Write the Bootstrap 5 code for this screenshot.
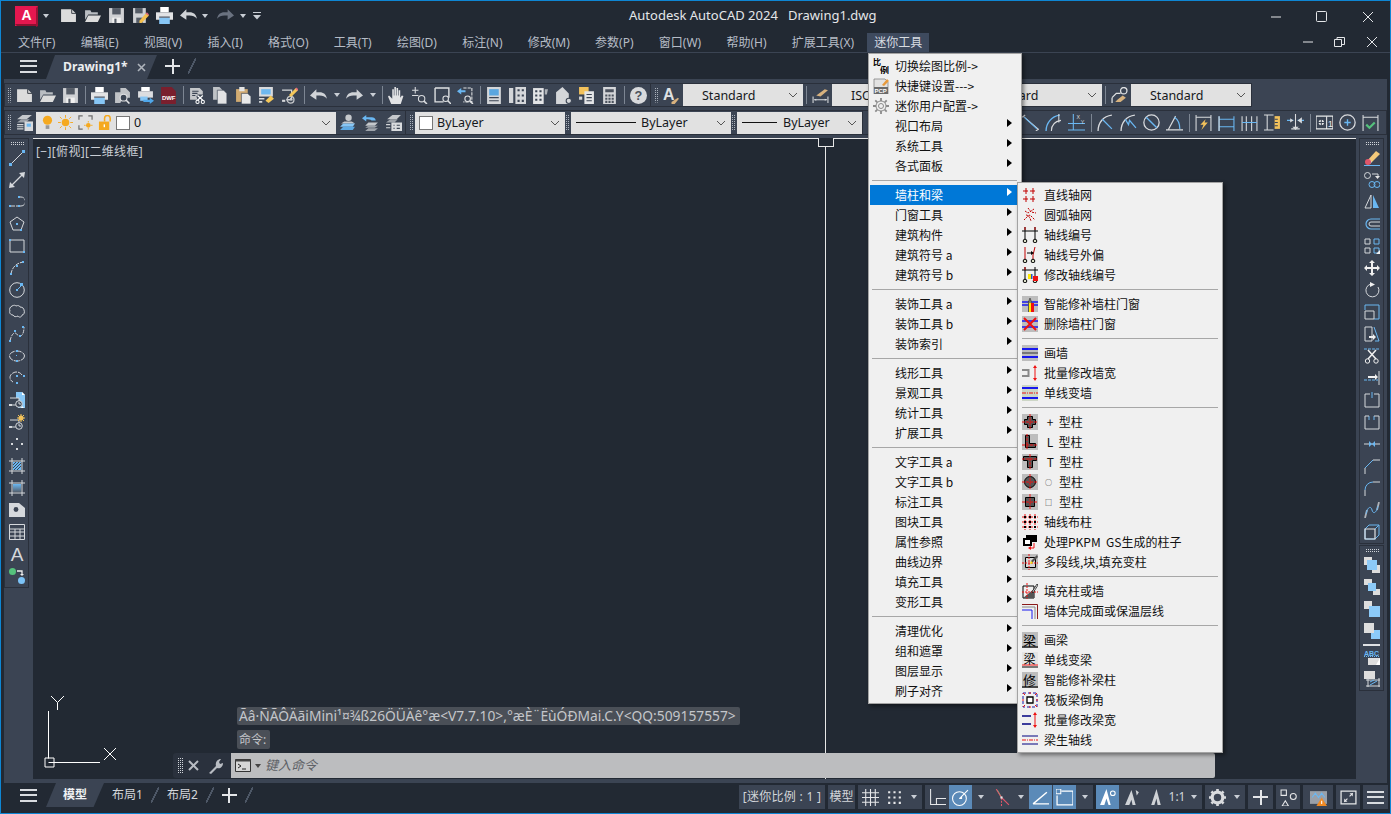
<!DOCTYPE html>
<html lang="zh-CN">
<head>
<meta charset="UTF-8" />
<title>Autodesk AutoCAD 2024 - Drawing1.dwg</title>
<link rel="stylesheet" href="https://cdn.jsdelivr.net/npm/bootstrap@5.3.3/dist/css/bootstrap.min.css" />
<script src="https://cdn.jsdelivr.net/npm/bootstrap@5.3.3/dist/js/bootstrap.bundle.min.js"></script>
<style>
  html, body { height: 100%; overflow: hidden; background: #222933; }
  body { font: 12px/1.2 "Noto Sans", "Noto Sans CJK SC", sans-serif; color: #c9ced5; }
  .app-win { position: relative; width: 1391px; height: 814px; border: 1px solid #0e86d4; background: #222933; overflow: hidden; }
  svg { display: block; flex: none; }

  /* title bar */
  .title-bar { height: 32px; padding: 0 0 3px 14px; }
  .title-bar .qic { width: 17px; height: 17px; margin-right: 7px; }
  .logo-a { margin-right: 3px; }
  .qcaret { width: 0; height: 0; border: 3.5px solid transparent; border-top: 4px solid #c9ced5; border-bottom: 0; flex: none; }
  .car-logo { margin-right: 11px; }
  .car-undo { margin-left: -2px; margin-right: 9px; }
  .car-redo { margin-left: -1px; margin-right: 6px; }
  .win-title { position: absolute; left: 628px; top: 7px; font-size: 13px; color: #e4e6e9; white-space: pre; }
  .win-ctl { position: absolute; display: flex; }
  .win-ctl svg { width: 12px; height: 12px; }
  .ctl-top { left: 1269px; top: 10px; gap: 34px; }
  .ctl-doc { left: 1301px; top: 35px; gap: 20px; }

  /* menu bar */
  .menu-bar { height: 20px; padding-left: 17px; gap: 25.25px; border-bottom: 1px solid #3b4453; color: #b6bcc6; line-height: 19px; }
  .menu-on { background: #3e4a5e; color: #d8dce2; margin: 0 0 0 -12px; padding: 0 6px; height: 19px; width: 62px; text-align: center; }

  /* document tabs */
  .doc-tabs { height: 26px; padding-left: 19px; }
  .burger { width: 17px; height: 13px; border-top: 2px solid #d9dce0; border-bottom: 2px solid #d9dce0; position: relative; flex: none; }
  .burger::after { content: ""; position: absolute; left: 0; right: 0; top: 3.5px; height: 2px; background: #d9dce0; }
  .doc-tab { height: 24px; width: 111px; margin-left: 9px; margin-top: 2px; background: #3b4453; clip-path: polygon(9px 0, 100% 0, 91% 100%, 0 100%); color: #eceef0; font-weight: 700; font-size: 12.2px; padding-left: 17px; gap: 9px; }
  .slash { width: 8px; height: 16px; background: linear-gradient(to bottom right, transparent 44%, #4d5766 44% 56%, transparent 56%); flex: none; }
  .plus-ic { width: 15px; height: 15px; flex: none; background: linear-gradient(#e4e6e9, #e4e6e9) center/100% 2px no-repeat, linear-gradient(#e4e6e9, #e4e6e9) center/2px 100% no-repeat; }

  /* toolbars */
  .tool-band { height: 59px; margin: 0 3px; background: #3b4453; padding-top: 4px; }
  .tool-row { height: 24px; margin-bottom: 3px; }
  .tool-row2 { height: 25px; }
  .tbar { height: 100%; border: 1px solid #2a303b; display: flex; align-items: center; }
  .tool-row > .tbar + .tbar, .tool-row2 > .tbar + .tbar { border-left: 0; padding-left: 1px; }
  .grip { width: 8px; flex: none; height: 15px; background: conic-gradient(#aab1bb 25%, transparent 0) 2px 0/2px 2px; background-repeat: repeat; clip-path: inset(0 2px 0 2px); }
  .grip-s { width: 6px; clip-path: inset(0 1px 0 1px); }
  .tic { width: 17px; height: 17px; margin: 0 3px; }
  .tsep { width: 6px; height: 18px; flex: none; background: linear-gradient(#7d8693, #7d8693) center/1px 100% no-repeat; }
  .tcar { width: 13px; display: flex; justify-content: center; flex: none; }
  .cbo { height: 22px; background: #e1e1e1; color: #16181c; display: flex; align-items: center; flex: none; position: relative; font-size: 12.5px; white-space: nowrap; }
  .cbo-arrow { position: absolute; right: 5px; top: 8px; width: 10px; height: 6px; }
  .w-120 { width: 120px; padding-left: 19px; }
  .w-106 { width: 106px; padding-left: 19px; }
  .w-135 { width: 135px; padding-left: 18px; }
  .w-300 { width: 300px; padding-left: 6px; }
  .w-150 { width: 150px; padding-left: 4px; }
  .w-160 { width: 160px; padding-left: 5px; }
  .w-125 { width: 125px; padding-left: 5px; }
  .swatch { width: 14px; height: 14px; background: #fff; border: 1px solid #777; flex: none; }
  .line-sample { height: 1px; background: #111; flex: none; }
  .ls-60 { width: 60px; margin-right: 5px; }
  .ls-35 { width: 35px; margin-right: 6px; }
  .lay-ic { width: 15px; height: 15px; margin-right: 5px; }
  .lay-bulb { width: 11px; }
  .lay-lock { margin-right: 3px; }

  /* work area */
  .work { height: 641px; margin: 0 3px; }
  .side-band { background: #3b4453; flex: none; }
  .side-left { width: 29px; }
  .side-right { width: 31px; padding-left: 3px; }
  .vbar { width: 25px; border: 1px solid #2a303b; display: flex; flex-direction: column; align-items: center; }
  .vbar + .vbar { margin-top: 1px; }
  .vbar svg { width: 16px; height: 16px; margin: 3px 0; }
  .vgrip { width: 14px; height: 3px; margin: 3px 0 2px; background: conic-gradient(#cfd3d8 25%, transparent 0) 0 0/2px 2px; flex: none; }
  .vline { width: 17px; height: 2px; background: #dfe1e4; margin: 2px 0 0; flex: none; }
  .canvas { position: relative; background: #222933; flex-grow: 1; border-top: 1px solid #e6e6e6; }
  .cross-v { position: absolute; left: 792px; top: 0; bottom: 0; width: 1px; background: #e6e6e6; }
  .pick-box { position: absolute; left: 785px; top: -1px; width: 16px; height: 9px; border: 1px solid #e6e6e6; border-top: 0; background: #222933; }
  .view-label { position: absolute; left: 3px; top: 6px; color: #c9ced5; white-space: nowrap; letter-spacing: .35px; }
  .ucs-ic { position: absolute; left: 9px; top: 552px; width: 80px; height: 80px; }
  .cmd-hist { position: absolute; left: 204px; background: #4a4f57; color: #c4c6ca; border-radius: 2px; padding: 0 2px; white-space: nowrap; font-size: 13.8px; }
  .cmd-hist1 { top: 568px; height: 18px; line-height: 18px; width: 503px; }
  .cmd-hist2 { top: 591px; height: 19px; line-height: 19px; width: 33px; font-size: 12px; }
  .cmd-bar { position: absolute; left: 140px; top: 614px; width: 1042px; height: 25px; }
  .cmd-handle { width: 58px; background: #2a313d; flex: none; padding-left: 4px; gap: 5px; border-radius: 3px 0 0 3px; }
  .cmd-grip { width: 6px; height: 16px; background: conic-gradient(#cfd3d8 25%, transparent 0) 0 0/2px 2px; flex: none; }
  .cmd-input { background: #bcbdbf; flex-grow: 1; padding-left: 4px; color: #5e6166; font-style: italic; font-size: 13px; border-radius: 0 2px 2px 0; }
  .cmd-caret { border-top-color: #444; }

  /* bottom tabs and status */
  .bottom-gap { height: 4px; margin: 0 3px; background: #3b4453; }
  .bottom-bar { height: 30px; padding: 0 0 6px 19px; }
  .lay-tab { height: 24px; width: 58px; margin-left: 9px; background: #3b4453; clip-path: polygon(10px 0, 100% 0, 82% 100%, 0 100%); color: #eef0f2; font-weight: 700; font-size: 12px; padding-left: 17px; line-height: 24px; }
  .lay-other { color: #d4d7db; font-size: 12px; }
  .status { height: 24px; margin-right: 2px; margin-top: 4px; gap: 3px; }
  .sgrp { height: 24px; background: #3b4453; display: flex; align-items: center; flex: none; color: #d3d6da; }
  .sslot { width: 24px; height: 24px; display: flex; align-items: center; justify-content: center; flex: none; }
  .sslot svg { width: 17px; height: 17px; }
  .sslot-on { background: #5b8ab8; width: 23px; margin-right: 1px; }
  .sslot-25 { width: 25px; }
  .sslot-30 { width: 30px; }
  .sarr { width: 16px; display: flex; justify-content: center; flex: none; }
  .stext-1 { width: 86px; justify-content: center; letter-spacing: .3px; }
  .stext-2 { width: 27px; justify-content: center; font-size: 12px; }
  .stext-3 { width: 18px; justify-content: center; }

  /* cascading menus */
  .pop-menu { position: absolute; background: #f0f0f0; border: 1px solid #a3a3a3; padding: 2px; color: #111; font-family: "Noto Sans CJK SC", "Noto Sans", sans-serif; box-shadow: 2px 2px 4px rgba(0, 0, 0, .45); z-index: 5; }
  .pop-main { left: 867px; top: 52px; width: 154px; height: 651px; padding-left: 1px; }
  .pop-sub { left: 1016px; top: 181px; width: 206px; height: 571px; z-index: 6; }
  .pitem { height: 20px; display: flex; align-items: center; position: relative; white-space: pre; line-height: 20px; }
  .pop-sub .pitem { padding-left: 24px; }
  .pitem > svg { position: absolute; left: 2px; top: 2px; width: 16px; height: 16px; }
  .pop-main .pitem { padding-left: 25px; }
  .pop-main .pitem > svg { left: 3px; }
  .pitem-on { background: #0078d7; color: #fff; }
  .psub::after { content: ""; position: absolute; right: 7px; top: 3px; border: 4px solid transparent; border-left: 5px solid #000; border-right: 0; }
  .pitem-on.psub::after { border-left-color: #fff; }
  .psep { height: 9px; display: flex; align-items: center; padding: 0 2px; }
  .psep::before { content: ""; flex: 1; height: 1px; background: #a7a7a7; }
  .mini-glyph { font-size: 7px; width: 15px; padding-left: 1px; }
</style>
</head>
<body>
<svg width="0" height="0" class="position-absolute">
  <defs>
    <!-- quick access / standard toolbar -->
    <symbol id="i-new" viewBox="0 0 16 16"><path d="M1 2h10l4 4v8H1z" fill="#dcdcdc"/><path d="M11 2v4h4" fill="none" stroke="#222933" stroke-width=".8"/></symbol>
    <symbol id="i-open" viewBox="0 0 16 16"><path d="M1 3h5l1 2h6v2H4L1 12z" fill="#b9bdc2"/><path d="M4 8h12l-3 6H1z" fill="#dcdcdc"/></symbol>
    <symbol id="i-save" viewBox="0 0 16 16"><path d="M1 1h14v14H1z" fill="#cfd1d4"/><path d="M4 1h8v6H4z" fill="#545b66"/><path d="M4 10h8v5H4z" fill="#f0f0f0"/><path d="M6 11h2v4H6z" fill="#545b66"/></symbol>
    <symbol id="i-saveas" viewBox="0 0 16 16"><path d="M1 1h12v14H1z" fill="#cfd1d4"/><path d="M3 1h7v5H3z" fill="#545b66"/><path d="M4 10h6v5H4z" fill="#545b66"/><path d="M7 13l6-7 3 2-7 7H7z" fill="#f5c04e"/><path d="M13 6l1-1 2 2-1 1z" fill="#e56b7b"/></symbol>
    <symbol id="i-print" viewBox="0 0 16 16"><path d="M4 0h8v5H4z" fill="#fff"/><path d="M0 5h16v7H0z" fill="#e2e3e5"/><path d="M3 10h10v6H3z" fill="#87c6f5"/><path d="M3 9h10v1H3z" fill="#3b4453"/></symbol>
    <symbol id="i-preview" viewBox="0 0 16 16"><path d="M1 5h5V1h5l4 4v5H8l-2 5H1z" fill="#bfc2c6"/><circle cx="9" cy="10" r="3.2" fill="#3b4453" stroke="#e3e4e6"/><path d="M11.500 12.500l3 3" stroke="#e3e4e6" stroke-width="1.500"/></symbol>
    <symbol id="i-plotbatch" viewBox="0 0 16 16"><path d="M4 0h8v4H4z" fill="#fff"/><path d="M1 4h14v6H1z" fill="#dcdde0"/><path d="M3 9h7v4H3z" fill="#87c6f5"/><path d="M6 12h6v-2l4 3-4 3v-2H6z" fill="#4fa7ea"/></symbol>
    <symbol id="i-dwf" viewBox="0 0 16 16"><path d="M1 0h10l4 4v12H1z" fill="#7a1f2d"/><text x="1.800" y="12.500" font-size="5.600" font-weight="700" fill="#fff" font-family="Liberation Sans">DWF</text></symbol>
    <symbol id="i-cut" viewBox="0 0 16 16"><path d="M1 1h9l3 3v3H8l-1 2 1 3H1z" fill="#c5c7ca"/><path d="M3 4h6M3 6h5M3 8h3" stroke="#3b4453"/><circle cx="8" cy="14" r="1.500" fill="none" stroke="#fff"/><circle cx="13" cy="14" r="1.500" fill="none" stroke="#fff"/><path d="M8 12.500L13 8M13 12.500L8 8" stroke="#fff" stroke-width="1.200"/></symbol>
    <symbol id="i-copy" viewBox="0 0 16 16"><path d="M1 0h6l3 3v9H1z" fill="#bfc2c6"/><path d="M5 3h6l3 3v10H5z" fill="#e1e2e4" stroke="#3b4453" stroke-width=".6"/></symbol>
    <symbol id="i-paste" viewBox="0 0 16 16"><path d="M1 2h11v12H1z" fill="#d2ab72"/><path d="M4 0h5v4H4z" fill="#e4e4e4"/><path d="M6 6h6l3 3v7H6z" fill="#e8e8e8" stroke="#3b4453" stroke-width=".6"/></symbol>
    <symbol id="i-match" viewBox="0 0 16 16"><path d="M1 0h13v9H1z" fill="#d9dadc"/><path d="M3 2h9v5H3z" fill="#6fb8ef"/><path d="M1 11h5M1 14h3" stroke="#d9dadc" stroke-width="1.500"/><path d="M7 13l5-5 3 3-5 4z" fill="#f4c75a"/></symbol>
    <symbol id="i-publish" viewBox="0 0 16 16"><path d="M1 3h9v9H5" fill="none" stroke="#d4d6d9" stroke-width="1.200"/><circle cx="9" cy="12" r="3.200" fill="none" stroke="#c7c9cc" stroke-width="1.200"/><path d="M9 10v2h2" stroke="#c7c9cc" fill="none"/><path d="M8 7l6-6 2 2-6 6H8z" fill="#f4c75a"/><path d="M14 1l2 2" stroke="#e56b7b" stroke-width="1.500"/><path d="M1 12h3v2H1z" fill="#d4d6d9"/></symbol>
    <symbol id="i-undo" viewBox="0 0 16 16"><path d="M0 8l6-6v3h3c4 0 6 2 7 6-2-2-4-3-7-3H6v4z" fill="#d0d3d7"/></symbol>
    <symbol id="i-redo" viewBox="0 0 16 16"><path d="M16 8l-6-6v3H7c-4 0-6 2-7 6 2-2 4-3 7-3h3v4z" fill="#d0d3d7"/></symbol>
    <symbol id="i-redo-off" viewBox="0 0 16 16"><path d="M16 8l-6-6v3H7c-4 0-6 2-7 6 2-2 4-3 7-3h3v4z" fill="#6a7280"/></symbol>
    <symbol id="i-hand" viewBox="0 0 16 16"><path d="M3 16L0 9l1-1 3 3V2h1.500v6H6V0h1.500v8H8V1h1.500v7h.5V3h1.500v7l1.500-2 1.500.5L12 16z" fill="#e2e3e5"/></symbol>
    <symbol id="i-zrt" viewBox="0 0 16 16"><path d="M4 0v6M1 3h6M1 8h6" stroke="#d9dbde" fill="none"/><circle cx="10" cy="11" r="3" fill="none" stroke="#d9dbde"/><path d="M12 13l3 3" stroke="#d9dbde" stroke-width="1.500"/></symbol>
    <symbol id="i-zwin" viewBox="0 0 16 16"><path d="M1 1h13v9M9 14H1V1" fill="none" stroke="#dfe1e3" stroke-width="1.300"/><circle cx="11" cy="11" r="2.600" fill="none" stroke="#dfe1e3"/><path d="M13 13l3 3" stroke="#dfe1e3" stroke-width="1.400"/></symbol>
    <symbol id="i-zprev" viewBox="0 0 16 16"><path d="M6 1h8v13H6" fill="none" stroke="#dfe1e3" stroke-dasharray="3 1"/><path d="M0 4l4-3v2h4v2H4v2z" fill="#6ab7f2"/><circle cx="10" cy="11" r="2.600" fill="none" stroke="#dfe1e3"/><path d="M12 13l3 3" stroke="#dfe1e3" stroke-width="1.400"/></symbol>
    <symbol id="i-props" viewBox="0 0 16 16"><path d="M1 0h13v16H1z" fill="#d4d6d9"/><path d="M3 2h9v6H3z" fill="#5aa6df"/><path d="M3 10h9M3 13h9" stroke="#3b4453"/></symbol>
    <symbol id="i-dc" viewBox="0 0 16 16"><path d="M0 1h4v14H0zM6 0h10v16H6z" fill="#d4d6d9"/><path d="M8 2h2v2H8zM12 2h2v2h-2zM8 7h2v2H8zM12 7h2v2h-2zM8 12h2v2H8zM12 12h2v2h-2z" fill="#3b4453"/></symbol>
    <symbol id="i-tp" viewBox="0 0 16 16"><path d="M1 1h10v15H1z" fill="#e3e4e6"/><path d="M3 3h2v2H3zM7 3h2v2H7zM3 7h2v2H3zM7 7h2v2H7zM3 11h2v2H3zM7 11h2v2H7z" fill="#3b4453"/><path d="M12 2h3l-1 5h-2z" fill="#aeb2b8"/></symbol>
    <symbol id="i-ssm" viewBox="0 0 16 16"><path d="M1 5l6-5 6 6v10H1z" fill="#d4d6d9"/><circle cx="13" cy="13" r="2.500" fill="#d4d6d9" stroke="#3b4453"/></symbol>
    <symbol id="i-mkup" viewBox="0 0 16 16"><path d="M1 0h9v7H1z" fill="#f3c25b"/><path d="M6 4h9v12H6z" fill="#e4e5e7"/><path d="M8 7h5M8 10h5M8 13h5" stroke="#3b4453"/><path d="M1 9h3v3H1z" fill="#d4d6d9"/></symbol>
    <symbol id="i-calc" viewBox="0 0 16 16"><path d="M2 0h12v16H2z" fill="#d4d6d9"/><path d="M4 2h8v3H4zM4 7h2v2H4zM7 7h2v2H7zM10 7h2v2h-2zM4 10h2v2H4zM7 10h2v2H7zM10 10h2v2h-2zM4 13h2v2H4zM7 13h2v2H7zM10 13h2v2h-2z" fill="#4b525d"/></symbol>
    <symbol id="i-help" viewBox="0 0 16 16"><circle cx="8" cy="8" r="8" fill="#d8dadd"/><text x="8" y="12.500" text-anchor="middle" font-size="12" font-weight="700" fill="#4a515c" font-family="Liberation Sans">?</text></symbol>
    <symbol id="i-tstyle" viewBox="0 0 16 16"><text x="0" y="12" font-size="15" font-weight="700" fill="#dfe1e3" font-family="Liberation Sans">A</text><path d="M8 14l6-4 1 1-4 5H8z" fill="#d8b27e"/></symbol>
    <symbol id="i-dstyle" viewBox="0 0 16 16"><path d="M1 9v6M15 9v6M2 12h12" stroke="#d9dbde" fill="none"/><path d="M2 12l2-1v2zM14 12l-2-1v2z" fill="#d9dbde"/><path d="M4 8l8-6 3 1-7 6z" fill="#d8b27e"/></symbol>
    <symbol id="i-mstyle" viewBox="0 0 16 16"><circle cx="12" cy="3.500" r="3" fill="none" stroke="#dfe1e3" stroke-width="1.200"/><path d="M1 10l4-4 4 0" fill="none" stroke="#dfe1e3" stroke-width="1.200"/><path d="M1 15v-5" stroke="#dfe1e3" stroke-width="1.200"/><path d="M6 12l5-4 3 2-5 4H4z" fill="#d8b27e"/></symbol>
    <!-- layer toolbar -->
    <symbol id="i-lprops" viewBox="0 0 16 16"><path d="M6 1h9l-5 4H1z" fill="#c5c8cc"/><path d="M5 5h8l-4 3H1z" fill="#9ea3aa"/><path d="M8 7h8v9H8z" fill="#d9dbde"/><path d="M10 9h4v3h-4z" fill="#6fb8ef"/><path d="M1 10h6M1 12h6M1 14h6" stroke="#d4d6d9"/></symbol>
    <symbol id="i-bulb" viewBox="0 0 12 16"><circle cx="6" cy="5.500" r="5" fill="#f5a91f"/><path d="M4 11h4v4H4z" fill="#979797"/></symbol>
    <symbol id="i-sun" viewBox="0 0 16 16"><circle cx="8" cy="8" r="4" fill="#f5a91f"/><path d="M8 0v3M8 13v3M0 8h3M13 8h3M2 2l2 2M12 12l2 2M14 2l-2 2M4 12l-2 2" stroke="#f5a91f" fill="none"/></symbol>
    <symbol id="i-vpfrz" viewBox="0 0 16 16"><path d="M5 1H1v4M11 1h4v4M1 11v4h4" fill="none" stroke="#6d6d6d" stroke-width="1.300"/><circle cx="11" cy="11" r="2.500" fill="#f5a91f"/><path d="M11 6.500v1.500M11 14v1.500M6.500 11H8M14 11h1.500" stroke="#f5a91f"/></symbol>
    <symbol id="i-lock" viewBox="0 0 14 16"><path d="M6 7V3.500a3 3 0 0 1 6 0V7" fill="none" stroke="#f5a91f" stroke-width="1.600"/><path d="M0 7h11v9H0z" fill="#f5a91f"/><path d="M5 10h1.500v3H5z" fill="#fff"/></symbol>
    <symbol id="i-lmatch" viewBox="0 0 16 16"><circle cx="9" cy="3.500" r="3" fill="#c5c8cc"/><path d="M5 7h7l3 2H2z" fill="#c5c8cc"/><path d="M4 9h11l-2 3H1z" fill="#87c6f5"/><path d="M4 12h11l-2 3H1z" fill="#5ea9e3"/></symbol>
    <symbol id="i-lprev" viewBox="0 0 16 16"><path d="M0 4l4-3v2h5a4 4 0 0 1 4 3H9c-1-1-3-1-5-1v2z" fill="#6ab7f2"/><path d="M6 8h9l-3 3H3z" fill="#c5c8cc"/><path d="M6 11h9l-3 2H3zM6 13.500h9L12 16H3z" fill="#9ea3aa"/></symbol>
    <symbol id="i-lstate" viewBox="0 0 16 16"><path d="M7 1h8l-4 4H2z" fill="#c5c8cc"/><path d="M5 5h7L9 8H1z" fill="#9ea3aa"/><path d="M6 8h10v8H6z" fill="#d9dbde"/><path d="M8 10h1v1H8zM11 10h3v1h-3zM8 13h1v1H8zM11 13h3v1h-3z" fill="#3b4453"/><path d="M1 10h4M1 13h4" stroke="#d4d6d9"/></symbol>
    <!-- dimension toolbar -->
    <symbol id="i-dlinear" viewBox="0 0 16 16"><path d="M0 3l3-2M13 16l3-2M1 2l14 12" stroke="#d9dbde" fill="none"/><path d="M2 3l12 11" stroke="#6ab7f2"/></symbol>
    <symbol id="i-darc" viewBox="0 0 16 16"><path d="M1 16C1 9 6 2 14 1" fill="none" stroke="#6ab7f2" stroke-width="1.300"/><path d="M6 16c0-5 3-9 9-10" fill="none" stroke="#d9dbde"/><path d="M13 0v8" stroke="#d9dbde"/></symbol>
    <symbol id="i-dord" viewBox="0 0 16 16"><path d="M5 0v15M0 9h16M0 15h16" stroke="#6ab7f2" fill="none"/><text x="8" y="4.500" font-size="5" fill="#d9dbde" font-family="Liberation Sans">X</text><text x="12" y="9" font-size="5" fill="#d9dbde" font-family="Liberation Sans">Y</text></symbol>
    <symbol id="i-drad" viewBox="0 0 16 16"><path d="M1 16C1 8 6 2 14 1" fill="none" stroke="#d9dbde" stroke-width="1.200"/><path d="M5 5l9 9" stroke="#6ab7f2" stroke-width="1.200"/></symbol>
    <symbol id="i-djog" viewBox="0 0 16 16"><path d="M1 16C1 8 6 2 14 1" fill="none" stroke="#d9dbde" stroke-width="1.200"/><path d="M5 5l3 5 1-4 6 7" fill="none" stroke="#6ab7f2" stroke-width="1.200"/></symbol>
    <symbol id="i-ddia" viewBox="0 0 16 16"><circle cx="8" cy="8" r="7.200" fill="none" stroke="#d9dbde" stroke-width="1.200"/><path d="M3 3l10 10" stroke="#6ab7f2" stroke-width="1.300"/></symbol>
    <symbol id="i-dang" viewBox="0 0 16 16"><path d="M0 15h16M2 15L9 2" stroke="#d9dbde" fill="none" stroke-width="1.100"/><path d="M8 3c3 2 5 6 5 11" stroke="#6ab7f2" fill="none" stroke-width="1.100"/></symbol>
    <symbol id="i-dquick" viewBox="0 0 16 16"><path d="M1 1v15M15 1v15M1 3h14" stroke="#d9dbde" fill="none"/><path d="M10 5L5 10h3l-2 5 6-7H9z" fill="#f3c25b"/></symbol>
    <symbol id="i-dcont" viewBox="0 0 16 16"><path d="M1 2v14M15 2v14M1 5h14M1 12h14" stroke="#6ab7f2" fill="none"/><path d="M1 2v14" stroke="#d9dbde"/></symbol>
    <symbol id="i-dbase" viewBox="0 0 16 16"><path d="M1 2v14M15 2v14M5 2v14M10 2v14" stroke="#d9dbde" fill="none"/><path d="M1 8h14" stroke="#6ab7f2"/></symbol>
    <symbol id="i-dspace" viewBox="0 0 16 16"><path d="M0 1h9M0 15h9" stroke="#d9dbde"/><path d="M3 1v14" stroke="#d9dbde"/><path d="M10 2h5v12h-5z" fill="#f3c25b"/><path d="M10 5h3M10 8h3M10 11h3" stroke="#3b4453"/></symbol>
    <symbol id="i-dbreak" viewBox="0 0 16 16"><path d="M0 6h6M10 6h6" stroke="#6ab7f2"/><path d="M8 0v13M4 14h8" stroke="#d9dbde" fill="none"/><path d="M10 6l4-3v6zM6 6L3 4v4z" fill="#d9dbde"/><path d="M5 12h6l-3 3z" fill="#d9dbde"/></symbol>
    <symbol id="i-dtol" viewBox="0 0 16 16"><path d="M0 2h16v12H0z" fill="none" stroke="#e8e9ea" stroke-width="1.200"/><path d="M10 2v12" stroke="#e8e9ea"/><circle cx="5" cy="8" r="2.500" fill="#e8e9ea"/><path d="M1 8h8M5 4v8" stroke="#3b4453"/><text x="11" y="12.500" font-size="9" fill="#e8e9ea" font-family="Liberation Sans">1</text></symbol>
    <symbol id="i-dcen" viewBox="0 0 16 16"><circle cx="8" cy="8" r="7.200" fill="none" stroke="#d9dbde" stroke-width="1.200"/><path d="M8 5v6M5 8h6" stroke="#6ab7f2" stroke-width="1.300"/></symbol>
    <symbol id="i-dins" viewBox="0 0 16 16"><path d="M1 1v15M15 1v15M1 3h14" stroke="#d9dbde" fill="none"/><path d="M4 10l3 3 5-5" fill="none" stroke="#55c17c" stroke-width="2"/></symbol>
    <!-- draw toolbar -->
    <symbol id="d-line" viewBox="0 0 16 16"><path d="M2 14L14 2" stroke="#d5d8dc"/><path d="M0 13h3v3H0zM13 0h3v3h-3z" fill="#6ab7f2"/></symbol>
    <symbol id="d-ray" viewBox="0 0 16 16"><path d="M2 14L14 2" stroke="#d5d8dc" stroke-width="1.300"/><path d="M0 16l1-6 5 5zM16 0l-1 6-5-5z" fill="#d5d8dc"/></symbol>
    <symbol id="d-pline" viewBox="0 0 16 16"><path d="M1 12h9M10 3h2a4.500 4.500 0 0 1 0 9h-1" fill="none" stroke="#d5d8dc" stroke-dasharray="5 1"/><path d="M0 11h2v2H0zM9 11h2v2H9zM9 2h2v2H9z" fill="#6ab7f2"/></symbol>
    <symbol id="d-poly" viewBox="0 0 16 16"><path d="M8 1l7 5-3 8H4L1 6z" fill="none" stroke="#d5d8dc"/><path d="M7 7h2v2H7zM11 13h2v2h-2z" fill="#6ab7f2"/></symbol>
    <symbol id="d-rect" viewBox="0 0 16 16"><path d="M1 2h14v12H1z" fill="none" stroke="#d5d8dc"/><path d="M0 1h2v2H0zM14 13h2v2h-2z" fill="#6ab7f2"/></symbol>
    <symbol id="d-arc" viewBox="0 0 16 16"><path d="M2 14C3 7 8 3 14 2" fill="none" stroke="#d5d8dc" stroke-dasharray="4 1"/><path d="M1 13h2v2H1zM7 5h2v2H7zM13 1h2v2h-2z" fill="#6ab7f2"/></symbol>
    <symbol id="d-circle" viewBox="0 0 16 16"><circle cx="8" cy="8" r="7.300" fill="none" stroke="#d5d8dc"/><path d="M8 8l5-5" stroke="#6ab7f2"/><path d="M7 7h2v2H7zM11 1h3v3h-3z" fill="#6ab7f2"/></symbol>
    <symbol id="d-cloud" viewBox="0 0 16 16"><path d="M3 2c2-1 3-1 4 0 2-1 4 0 4 1 3 0 4 2 4 3 1 2 0 5-2 5 0 2-3 3-4 1-2 1-4 1-5-1-3 0-4-3-3-4C0 5 1 3 3 2z" fill="none" stroke="#d5d8dc"/></symbol>
    <symbol id="d-spline" viewBox="0 0 16 16"><path d="M1 15c1-5 3-8 5-8 2 0 2 3 5 3 3 0 4-5 4-9" fill="none" stroke="#d5d8dc" stroke-dasharray="4 1"/><path d="M0 14h2v2H0zM5 4h2v2H5zM10 9h2v2h-2zM13 0h2v2h-2z" fill="#6ab7f2"/></symbol>
    <symbol id="d-ell" viewBox="0 0 16 16"><ellipse cx="8" cy="8" rx="7.500" ry="5" fill="none" stroke="#d5d8dc" stroke-dasharray="6 1"/><path d="M7 2h2v2H7zM7 12h2v2H7zM7 7h1v1H7z" fill="#6ab7f2"/></symbol>
    <symbol id="d-ellarc" viewBox="0 0 16 16"><path d="M13 5C11 2 7 1 4 3 0 5 0 10 4 12" fill="none" stroke="#d5d8dc" stroke-dasharray="5 1"/><path d="M7 5h2v2H7zM14 5h2v2h-2zM7 12h2v2H7z" fill="#6ab7f2"/></symbol>
    <symbol id="d-ins" viewBox="0 0 16 16"><path d="M7 0h6l3 3v13H9V6H7z" fill="#87c6f5"/><path d="M13 0l3 3h-3z" fill="#fff"/><path d="M13 14l2 2h-3z" fill="#fff"/><path d="M1 6h9v7H1" fill="#3b4453" stroke="#d5d8dc"/><circle cx="10" cy="12" r="3.300" fill="#3b4453" stroke="#d5d8dc"/><path d="M10 10v2h2" stroke="#d5d8dc" fill="none"/><path d="M0 12h3v2H0z" fill="#d5d8dc"/></symbol>
    <symbol id="d-blk" viewBox="0 0 16 16"><path d="M1 6h9v7H1" fill="none" stroke="#d5d8dc"/><circle cx="10" cy="12" r="3.300" fill="#3b4453" stroke="#d5d8dc"/><path d="M10 10v2h2" stroke="#d5d8dc" fill="none"/><path d="M0 12h3v2H0z" fill="#d5d8dc"/><circle cx="12" cy="4" r="2.500" fill="#f3c25b"/><path d="M12 0v8M8 4h8M9 1l6 6M15 1L9 7" stroke="#f3c25b"/></symbol>
    <symbol id="d-pt" viewBox="0 0 16 16"><path d="M7 2h2v2H7zM2 7h2v2H2zM12 7h2v2h-2zM7 12h2v2H7z" fill="#d5d8dc"/></symbol>
    <symbol id="d-hatch" viewBox="0 0 16 16"><path d="M0 3h16M0 13h16M3 0v16M13 0v16" stroke="#d5d8dc" fill="none"/><path d="M4 4h8v8H4z" fill="#6ab7f2"/><path d="M4 7l3-3M4 10l6-6M5 12l7-7M8 12l4-4" stroke="#3b4453"/></symbol>
    <symbol id="d-grad" viewBox="0 0 16 16"><defs><linearGradient id="gr1" x1="0" y1="0" x2="0" y2="1"><stop offset="0" stop-color="#6ab7f2"/><stop offset="1" stop-color="#55606e"/></linearGradient></defs><path d="M0 3h16M0 13h16M3 0v16M13 0v16" stroke="#d5d8dc" fill="none"/><path d="M4 4h8v8H4z" fill="url(#gr1)"/></symbol>
    <symbol id="d-region" viewBox="0 0 16 16"><path d="M0 1h10l6 5v9H0z" fill="#d5d8dc"/><circle cx="7" cy="7.500" r="2.400" fill="#3b4453"/></symbol>
    <symbol id="d-table" viewBox="0 0 16 16"><path d="M.5.500h15v15H.5zM.5 5h15M.5 8h15M.5 12h15M6 5v10.500M11 5v10.500" fill="none" stroke="#d5d8dc"/></symbol>
    <symbol id="d-text" viewBox="0 0 16 16"><text x="8" y="15" text-anchor="middle" font-size="19" fill="#d5d8dc" font-family="Liberation Sans">A</text></symbol>
    <symbol id="d-addsel" viewBox="0 0 16 16"><circle cx="3.500" cy="3.500" r="3.500" fill="#55c17c"/><circle cx="12.500" cy="12.500" r="3.500" fill="#7cc3f7"/><path d="M8 3h5v3" fill="none" stroke="#eee" stroke-width="1.300"/><path d="M11 6h4l-2 2z" fill="#eee"/></symbol>
    <!-- modify toolbar -->
    <symbol id="m-erase" viewBox="0 0 16 16"><path d="M3 11L12 1l4 3-8 8z" fill="#f3c97a"/><path d="M3 11l3 3 2-2-3-3z" fill="#e8e8e8"/><circle cx="4" cy="12" r="3" fill="#e0566a"/><path d="M0 15.500h16" stroke="#6ab7f2"/></symbol>
    <symbol id="m-copy" viewBox="0 0 16 16"><circle cx="3.500" cy="3.500" r="3" fill="none" stroke="#d5d8dc"/><path d="M8 2h6v2" fill="none" stroke="#d5d8dc"/><path d="M11 4h5l-2.500 3z" fill="#e6e6e6"/><circle cx="8" cy="12.500" r="3" fill="none" stroke="#6ab7f2"/><circle cx="13" cy="12.500" r="3" fill="none" stroke="#6ab7f2"/></symbol>
    <symbol id="m-mirror" viewBox="0 0 16 16"><path d="M7 1L1 14h6z" fill="none" stroke="#d5d8dc"/><path d="M9 1l6 13H9z" fill="#6ab7f2"/></symbol>
    <symbol id="m-offset" viewBox="0 0 16 16"><path d="M16 3H7a5 5 0 0 0 0 10h9" fill="none" stroke="#6ab7f2" stroke-width="1.200"/><path d="M16 6H7a2 2 0 0 0 0 4h9" fill="none" stroke="#d5d8dc"/></symbol>
    <symbol id="m-array" viewBox="0 0 16 16"><path d="M1 1h5v5H1zM1 10h5v5H1z" fill="none" stroke="#d5d8dc"/><path d="M10 1h5v5h-5zM10 10h5v5h-5z" fill="none" stroke="#6ab7f2"/><path d="M16 12v4h-4z" fill="#f0f0f0"/></symbol>
    <symbol id="m-move" viewBox="0 0 16 16"><path d="M8 0l3 3H9v4h4V5l3 3-3 3V9H9v4h2l-3 3-3-3h2V9H3v2L0 8l3-3v2h4V3H5z" fill="#f0f0f0"/></symbol>
    <symbol id="m-rotate" viewBox="0 0 16 16"><path d="M7 2a6.500 6.500 0 1 0 7 3" fill="none" stroke="#d5d8dc"/><path d="M6 0l5 2.500L6 5z" fill="#f0f0f0"/></symbol>
    <symbol id="m-scale" viewBox="0 0 16 16"><path d="M1 6V1h14v14h-5" fill="none" stroke="#6ab7f2"/><path d="M1 7h9v8H1z" fill="none" stroke="#d5d8dc"/></symbol>
    <symbol id="m-stretch" viewBox="0 0 16 16"><path d="M1 1h7v14H1z" fill="none" stroke="#d5d8dc"/><path d="M10 1l5 14h-4" fill="none" stroke="#6ab7f2"/><path d="M5 10h4V8l3 3-3 3v-2H5z" fill="#f0f0f0"/></symbol>
    <symbol id="m-trim" viewBox="0 0 16 16"><path d="M0 1h16" stroke="#6ab7f2" stroke-dasharray="3 1"/><path d="M4 2l8 9M12 2l-8 9" stroke="#f0f0f0" stroke-width="1.500"/><circle cx="3.500" cy="13" r="2.200" fill="none" stroke="#f0f0f0"/><circle cx="12" cy="13" r="2.200" fill="none" stroke="#f0f0f0"/></symbol>
    <symbol id="m-extend" viewBox="0 0 16 16"><path d="M15 1v14" stroke="#d5d8dc"/><path d="M0 10h14" stroke="#6ab7f2" stroke-dasharray="3 1"/><path d="M4 6h7V4l3 3-3 3V8H4z" fill="#f0f0f0"/></symbol>
    <symbol id="m-break" viewBox="0 0 16 16"><path d="M6 2H1v13h14V2h-5" fill="none" stroke="#d5d8dc"/><path d="M8 0v6" stroke="#6ab7f2"/></symbol>
    <symbol id="m-break2" viewBox="0 0 16 16"><path d="M5 6V2M10 6V2" stroke="#6ab7f2"/><path d="M5 2H1v13h14V2h-5" fill="none" stroke="#d5d8dc"/></symbol>
    <symbol id="m-join" viewBox="0 0 16 16"><path d="M0 8h16" stroke="#d5d8dc"/><path d="M5 5l3 3-3 3zM11 5L8 8l3 3z" fill="#6ab7f2"/></symbol>
    <symbol id="m-chamf" viewBox="0 0 16 16"><path d="M1 16v-6M9 2h7" stroke="#d5d8dc"/><path d="M1 10l8-8" stroke="#6ab7f2"/></symbol>
    <symbol id="m-fillet" viewBox="0 0 16 16"><path d="M1 16v-6M9 2h7" stroke="#d5d8dc"/><path d="M1 10a8 8 0 0 1 8-8" fill="none" stroke="#6ab7f2"/></symbol>
    <symbol id="m-blend" viewBox="0 0 16 16"><path d="M1 16L3 8M13 8l2-8" stroke="#aeb2b8" stroke-width="1.800"/><path d="M2 12C4 4 7 4 8 8s4 4 6-4" fill="none" stroke="#6ab7f2"/></symbol>
    <symbol id="m-3d" viewBox="0 0 16 16"><path d="M5 1h10v10l-4 4H1V5z" fill="none" stroke="#6ab7f2"/><path d="M1 5h10v10H1z" fill="none" stroke="#e0e2e4" stroke-width="1.200"/><path d="M11 5l4-4" stroke="#6ab7f2"/></symbol>
    <!-- draw order -->
    <symbol id="o-front" viewBox="0 0 16 16"><path d="M0 0h8v8H0zM8 8h8v8H8z" fill="#dedede"/><path d="M3 3h10v10H3z" fill="#8ccaf8"/></symbol>
    <symbol id="o-back" viewBox="0 0 16 16"><path d="M0 0h8v6H0zM9 10h7v6H9z" fill="#dedede"/><path d="M4 4h8v8H4z" fill="#8ccaf8"/><path d="M0 0h8v3H0z" fill="#dedede"/></symbol>
    <symbol id="o-above" viewBox="0 0 16 16"><path d="M0 0h8v8H0z" fill="#dedede"/><path d="M5 5h11v11H5z" fill="#8ccaf8"/></symbol>
    <symbol id="o-under" viewBox="0 0 16 16"><path d="M7 7h9v9H7z" fill="#8ccaf8"/><path d="M0 0h10v10H0z" fill="#dedede"/></symbol>
    <symbol id="o-abc" viewBox="0 0 16 16"><text x="0" y="7" font-size="7" font-weight="700" fill="#6ab7f2" font-family="Liberation Sans">ABC</text><path d="M0 7.500h16" stroke="#6ab7f2" stroke-dasharray="1 1"/><path d="M4 9h12v7H4z" fill="#dedede"/><path d="M16 9v7h-4z" fill="#fff"/></symbol>
    <symbol id="o-hatch" viewBox="0 0 16 16"><path d="M0 0h11v8H0z" fill="#dedede"/><path d="M4 7v9M15 7v9M2 9h14M2 15h14" stroke="#d5d8dc" fill="none"/><path d="M6 14l7-4M6 11l4-2" stroke="#6ab7f2"/></symbol>
    <!-- status bar -->
    <symbol id="s-grid" viewBox="0 0 16 16"><path d="M3.500 0v16M8 0v16M12.500 0v16M0 3.500h16M0 8h16M0 12.500h16" stroke="#e6e7e9"/></symbol>
    <symbol id="s-snap" viewBox="0 0 16 16"><path d="M2 2h2v2H2zM7 2h2v2H7zM12 2h2v2h-2zM2 7h2v2H2zM7 7h2v2H7zM12 7h2v2h-2zM2 12h2v2H2zM7 12h2v2H7zM12 12h2v2h-2z" fill="#e6e7e9"/></symbol>
    <symbol id="s-ortho" viewBox="0 0 16 16"><path d="M1.500 0v14.500H16M7 15V9h9" fill="none" stroke="#e6e7e9"/></symbol>
    <symbol id="s-polar" viewBox="0 0 16 16"><circle cx="7" cy="9" r="6.500" fill="none" stroke="#fff"/><path d="M7 9l8-8" stroke="#fff"/><path d="M7 9h2v-2" fill="none" stroke="#fff"/></symbol>
    <symbol id="s-track" viewBox="0 0 16 16"><path d="M4 1l4 7" stroke="#55c17c"/><path d="M8 8l7 7" stroke="#e0566a"/><path d="M8 8v8" stroke="#e0566a" stroke-dasharray="2 1"/><path d="M3 0l5 8" stroke="#e0566a"/><path d="M7 7h2v2H7z" fill="#e6e7e9"/></symbol>
    <symbol id="s-iso" viewBox="0 0 16 16"><path d="M1 14L14 3M1 14h15" fill="none" stroke="#fff" stroke-width="1.300"/></symbol>
    <symbol id="s-osnap" viewBox="0 0 16 16"><path d="M5 2h11v13H1V6" fill="none" stroke="#fff" stroke-width="1.200"/><path d="M0 0h4.500v4.500H0z" fill="none" stroke="#fff"/></symbol>
    <symbol id="s-ann" viewBox="0 0 16 16"><path d="M7 0l4 15H9L7 9l-2 6H1z" fill="#fff"/><circle cx="13" cy="4" r="2.200" fill="none" stroke="#fff"/></symbol>
    <symbol id="s-annb" viewBox="0 0 16 16"><path d="M7 1l4 14H8L7 10l-2 5H1z" fill="#cfd2d6"/><path d="M11 1l3 2-2 3z" fill="#cfd2d6"/></symbol>
    <symbol id="s-annc" viewBox="0 0 16 16"><path d="M8 0l4 15H9L8 9l-2 6H3z" fill="#cfd2d6"/></symbol>
    <symbol id="s-gear" viewBox="0 0 16 16"><circle cx="8" cy="8" r="5" fill="none" stroke="#d9dbde" stroke-width="3"/><path d="M8 0v3M8 13v3M0 8h3M13 8h3M2.300 2.300l2 2M11.700 11.700l2 2M13.700 2.300l-2 2M4.300 11.700l-2 2" stroke="#d9dbde" stroke-width="2.500"/></symbol>
    <symbol id="s-shapes" viewBox="0 0 16 16"><path d="M1 1h5v5H1z" fill="none" stroke="#e6e7e9"/><circle cx="12.500" cy="7" r="2.800" fill="none" stroke="#e6e7e9"/><path d="M5 11l3 5H2z" fill="none" stroke="#e6e7e9"/></symbol>
    <symbol id="s-warn" viewBox="0 0 16 16"><path d="M0 2h16v12H0z" fill="#9aa0a9"/><path d="M2 8l3-4 3 4 3-4 3 4" fill="none" stroke="#6ab7f2"/><path d="M11 8l5 8H6z" fill="#f08a24"/><path d="M10.500 11h1v3h-1z" fill="#fff"/></symbol>
    <symbol id="s-full" viewBox="0 0 16 16"><path d="M1 2h14v12H1z" fill="none" stroke="#e6e7e9" stroke-width="1.200"/><path d="M9 7l3-3M4 12l3-3" stroke="#e6e7e9"/><path d="M9 4h3v3zM7 12H4V9z" fill="#e6e7e9"/></symbol>
    <!-- menu icons -->
    <symbol id="p-scale" viewBox="0 0 16 16"><text x="0" y="7" font-size="8" font-weight="700" fill="#000" font-family="Noto Sans CJK SC">比</text><text x="7" y="16" font-size="9" font-weight="700" fill="#000" font-family="Noto Sans CJK SC">例</text></symbol>
    <symbol id="p-pcp" viewBox="0 0 16 16"><path d="M1 1h11l3 3v12H1z" fill="#e2e2e2" stroke="#777" stroke-width=".7"/><path d="M1 9h14v7H1z" fill="#6b6b6b"/><text x="1.500" y="15" font-size="6" font-weight="700" fill="#fff" font-family="Liberation Sans">PCP</text><path d="M9 7l5-6 2 2-5 5z" fill="#e89a3c"/></symbol>
    <symbol id="p-gear" viewBox="0 0 16 16"><circle cx="8" cy="8" r="5" fill="none" stroke="#8b8b8b" stroke-width="1"/><circle cx="8" cy="8" r="2.500" fill="none" stroke="#8b8b8b"/><path d="M8 0v3M8 13v3M0 8h3M13 8h3M2.300 2.300l2 2M11.700 11.700l2 2M13.700 2.300l-2 2M4.300 11.700l-2 2" stroke="#8b8b8b" stroke-width="1.800"/></symbol>
    <symbol id="p-grid" viewBox="0 0 16 16"><path d="M1 4h5M8 4h5M4 1v6M11 1v6M1 12h5M8 12h5M4 9v6M11 9v6" stroke="#c00000"/></symbol>
    <symbol id="p-arcgrid" viewBox="0 0 16 16"><path d="M2 13l4-4 2-1 5 5M3 4l3 2 6-4M6 1l3 4 5 1M4 8c2 0 4 2 5 6" fill="none" stroke="#c00000" stroke-dasharray="2 1"/></symbol>
    <symbol id="p-axnum" viewBox="0 0 16 16"><path d="M3 0v12M13 0v12M0 4h16" stroke="#000"/><path d="M3 0v3M13 0v3" stroke="#c00000"/><circle cx="3" cy="14" r="1.800" fill="#dbe0c8" stroke="#000"/><circle cx="13" cy="14" r="1.800" fill="#dbe0c8" stroke="#000"/></symbol>
    <symbol id="p-axoff" viewBox="0 0 16 16"><path d="M3 0v12" stroke="#c00000"/><path d="M13 0l-2 8v4" stroke="#c00000" fill="none"/><path d="M5 6h4" stroke="#000"/><path d="M9 4l3 2-3 2z" fill="#000"/><circle cx="3" cy="14" r="1.800" fill="#dbe0c8" stroke="#000"/><circle cx="11" cy="14" r="1.800" fill="#dbe0c8" stroke="#000"/></symbol>
    <symbol id="p-axedit" viewBox="0 0 16 16"><path d="M3 0v12M13 0v12M0 3h16" stroke="#000"/><path d="M3 0v3" stroke="#c00000"/><circle cx="3" cy="14" r="1.800" fill="#dbe0c8" stroke="#000"/><circle cx="13" cy="14" r="1.800" fill="#dbe0c8" stroke="#000"/><path d="M6 7h3v5H6z" fill="#ffe800"/><path d="M9 7h1.500v5H9z" fill="#2a50c8"/><path d="M11 9h5v5h-5z" fill="#ee1111"/></symbol>
    <symbol id="p-fix" viewBox="0 0 16 16"><path d="M0 0h16v16H0z" fill="#bdbdbd"/><path d="M0 6h16M0 9h16" stroke="#1818ee" stroke-width="1.400"/><path d="M6 5h2v11H6z" fill="#555"/><path d="M7 6h2v10H7z" fill="#ffe800"/><path d="M9 7h3v9H9z" fill="#ee1111"/><path d="M6 7l2-5 2 5" fill="#777" stroke="#333" stroke-width=".6"/></symbol>
    <symbol id="p-del" viewBox="0 0 16 16"><path d="M0 0h16v16H0z" fill="#bdbdbd"/><path d="M0 5h16M0 11h16" stroke="#1818ee" stroke-width="1.400"/><path d="M2 2l12 12M14 2L2 14" stroke="#ee1111" stroke-width="2"/></symbol>
    <symbol id="p-wall" viewBox="0 0 16 16"><path d="M0 0h16v16H0z" fill="#bdbdbd"/><path d="M0 4h16M0 12h16" stroke="#1818ee" stroke-width="2"/><path d="M0 8h16" stroke="#777" stroke-width="2"/></symbol>
    <symbol id="p-wwid" viewBox="0 0 16 16"><path d="M0 5h6.500v6H0" fill="none" stroke="#8a8a8a" stroke-width="2"/><path d="M13 2v12" stroke="#ee1111"/><path d="M13 0l2 3h-4zM13 16l2-3h-4z" fill="#ee1111"/></symbol>
    <symbol id="p-sline" viewBox="0 0 16 16"><path d="M0 0h16v16H0z" fill="#cdd6c6"/><path d="M0 3h16M0 13h16" stroke="#1818ee" stroke-width="2"/><path d="M0 8h16" stroke="#ee1111" stroke-dasharray="4 1 1 1"/></symbol>
    <symbol id="p-col1" viewBox="0 0 16 16"><path d="M0 0h16v16H0z" fill="#bdbdbd"/><path d="M5.500 2.500h5v3h3v5h-3v3h-5v-3h-3v-5h3z" fill="#555" stroke="#000"/><path d="M8 0v16M0 8h16" stroke="#ee1111" stroke-dasharray="3 1"/></symbol>
    <symbol id="p-col2" viewBox="0 0 16 16"><path d="M0 0h16v16H0z" fill="#bdbdbd"/><path d="M3.500 1.500h4v8h6v4h-10z" fill="#555" stroke="#000"/><path d="M5 0v16M0 11h16" stroke="#ee1111" stroke-dasharray="3 1"/></symbol>
    <symbol id="p-col3" viewBox="0 0 16 16"><path d="M0 0h16v16H0z" fill="#bdbdbd"/><path d="M1.500 2.500h13v4h-4v7h-5v-7h-4z" fill="#555" stroke="#000"/><path d="M8 0v16M0 5h16" stroke="#ee1111" stroke-dasharray="3 1"/></symbol>
    <symbol id="p-col4" viewBox="0 0 16 16"><path d="M0 0h16v16H0z" fill="#bdbdbd"/><circle cx="8" cy="8" r="5.500" fill="#555" stroke="#000"/><path d="M8 0v16M0 8h16" stroke="#ee1111" stroke-dasharray="3 1"/></symbol>
    <symbol id="p-col5" viewBox="0 0 16 16"><path d="M0 0h16v16H0z" fill="#bdbdbd"/><path d="M3.500 3.500h9v9h-9z" fill="#555" stroke="#000"/><path d="M8 0v16M0 8h16" stroke="#ee1111" stroke-dasharray="3 1"/></symbol>
    <symbol id="p-colgrid" viewBox="0 0 16 16"><path d="M0 3h16M0 8h16M0 13h16M3 0v16M8 0v16M13 0v16" stroke="#ee1111" stroke-dasharray="2 1"/><path d="M2 2h2v2H2zM7 2h2v2H7zM12 2h2v2h-2zM2 7h2v2H2zM7 7h2v2H7zM12 7h2v2h-2zM2 12h2v2H2zM7 12h2v2H7zM12 12h2v2h-2z" fill="#000"/></symbol>
    <symbol id="p-pkpm" viewBox="0 0 16 16"><path d="M4 1h11v7h-5v4H1V4h3z" fill="#000"/><path d="M3 6h5v4H3z" fill="#fff"/><path d="M12 9v5H9" fill="none" stroke="#ee1111"/><path d="M9 12v4l-3-2z" fill="#ee1111"/></symbol>
    <symbol id="p-pl2col" viewBox="0 0 16 16"><path d="M0 0h16v16H0z" fill="#bdbdbd"/><path d="M3.500 3.500h10v10h-10z" fill="#d6d6d6" stroke="#000"/><path d="M7 0v16M0 9h16" stroke="#ee1111" stroke-dasharray="2 1"/><path d="M9 7l6-6 1 2-6 6z" fill="#555"/><path d="M9 7l2 2-3 1z" fill="#ffe800"/></symbol>
    <symbol id="p-fill" viewBox="0 0 16 16"><path d="M1 3h11v12H1z" fill="none" stroke="#000"/><path d="M1 15L12 6v9z" fill="#555"/><path d="M5 0v16M0 9h16" stroke="#ee1111" stroke-dasharray="2 1"/><path d="M10 9l5-8 1 1-5 8z" fill="#fff" stroke="#000" stroke-width=".7"/></symbol>
    <symbol id="p-finish" viewBox="0 0 16 16"><path d="M0 1.500h15.500V16" fill="none" stroke="#8b1a1a"/><path d="M0 4h13v12" fill="none" stroke="#888"/><path d="M0 7h10v9" fill="none" stroke="#1818ee"/></symbol>
    <symbol id="p-beam" viewBox="0 0 16 16"><path d="M0 0h16v14H0z" fill="#bdbdbd"/><text x="1" y="12.500" font-size="13" fill="#000" font-family="Noto Sans CJK SC">梁</text><path d="M0 15h16" stroke="#000" stroke-width="1.400"/></symbol>
    <symbol id="p-beam2" viewBox="0 0 16 16"><path d="M0 0h16v12H0z" fill="#e4e4e4"/><text x="1.500" y="11.500" font-size="12" fill="#000" font-family="Noto Sans CJK SC">梁</text><path d="M0 13h16" stroke="#ee1111"/><path d="M0 15h16" stroke="#000"/></symbol>
    <symbol id="p-beam3" viewBox="0 0 16 16"><path d="M0 0h16v14H0z" fill="#bdbdbd"/><text x="1" y="12.500" font-size="13" fill="#000" font-family="Noto Sans CJK SC">修</text><path d="M0 15h16" stroke="#000" stroke-width="1.400"/></symbol>
    <symbol id="p-raft" viewBox="0 0 16 16"><path d="M1 1h14v14H1z" fill="none" stroke="#1818aa" stroke-dasharray="3 2"/><path d="M5 5h6v6H5z" fill="#fff" stroke="#000" stroke-width="1.300"/><path d="M1 1l2 2M15 1l-2 2M1 15l2-2M15 15l-2-2M8 0v2M8 14v2M0 8h2M14 8h2" stroke="#ee1111"/></symbol>
    <symbol id="p-bwid" viewBox="0 0 16 16"><path d="M0 4h9M0 12h9" stroke="#000080" stroke-width="1.400"/><path d="M13 2v12" stroke="#ee1111"/><path d="M13 0l2 3h-4zM13 16l2-3h-4z" fill="#ee1111"/></symbol>
    <symbol id="p-baxis" viewBox="0 0 16 16"><path d="M0 4h16M0 12h16" stroke="#000080"/><path d="M0 8h16" stroke="#ee1111" stroke-dasharray="4 1 1 1"/></symbol>
  </defs>
</svg>

<div class="app-win d-flex flex-column">
  <!-- title bar -->
  <div class="title-bar d-flex align-items-center">
    <svg width="25" height="22" viewBox="0 0 25 22" class="logo-a"><path d="M0 1h23v20H0z" fill="#e5174f"/><path d="M0 19l23 0v2H2z" fill="#8e1030"/><path d="M23 1v20l-2 1V3z" fill="#9b1235"/><text x="11.500" y="15" text-anchor="middle" font-size="14" font-weight="700" fill="#fff" font-family="Liberation Sans">A</text></svg>
    <span class="qcaret car-logo"></span>
    <svg class="qic"><use href="#i-new"/></svg>
    <svg class="qic"><use href="#i-open"/></svg>
    <svg class="qic"><use href="#i-save"/></svg>
    <svg class="qic"><use href="#i-saveas"/></svg>
    <svg class="qic"><use href="#i-print"/></svg>
    <svg class="qic"><use href="#i-undo"/></svg>
    <span class="qcaret car-undo"></span>
    <svg class="qic"><use href="#i-redo-off"/></svg>
    <span class="qcaret car-redo"></span>
    <svg width="10" height="8" viewBox="0 0 10 8"><path d="M1 .500h8" stroke="#c9ced5"/><path d="M1 3h8L5 7.500z" fill="#c9ced5"/></svg>
    <span class="win-title">Autodesk AutoCAD 2024   Drawing1.dwg</span>
    <div class="win-ctl ctl-top">
      <svg viewBox="0 0 12 12"><path d="M1 6h10" stroke="#e4e6e9"/></svg>
      <svg viewBox="0 0 12 12"><rect x=".5" y=".5" width="10" height="10" rx="1" fill="none" stroke="#e4e6e9"/></svg>
      <svg viewBox="0 0 12 12"><path d="M1 1l10 10M11 1L1 11" stroke="#e4e6e9"/></svg>
    </div>
    <div class="win-ctl ctl-doc">
      <svg viewBox="0 0 12 12"><path d="M1 6h10" stroke="#e4e6e9"/></svg>
      <svg viewBox="0 0 12 12"><path d="M.5 3.500h7v7h-7zM3 3V1.500h7.500v7H8" fill="none" stroke="#e4e6e9"/></svg>
      <svg viewBox="0 0 12 12"><path d="M1 1l10 10M11 1L1 11" stroke="#e4e6e9"/></svg>
    </div>
  </div>

  <!-- menu bar -->
  <div class="menu-bar d-flex">
    <span>文件(F)</span><span>编辑(E)</span><span>视图(V)</span><span>插入(I)</span><span>格式(O)</span><span>工具(T)</span><span>绘图(D)</span><span>标注(N)</span><span>修改(M)</span><span>参数(P)</span><span>窗口(W)</span><span>帮助(H)</span><span>扩展工具(X)</span><span class="menu-on">迷你工具</span>
  </div>

  <!-- document tabs -->
  <div class="doc-tabs d-flex align-items-center">
    <span class="burger"></span>
    <div class="doc-tab d-flex align-items-center"><span>Drawing1*</span><svg width="9" height="9" viewBox="0 0 9 9"><path d="M1 1l7 7M8 1L1 8" stroke="#aeb4bc" stroke-width="1.600"/></svg></div>
    <span class="plus-ic ms-2"></span>
    <span class="slash ms-2 ps-1"></span>
  </div>

  <!-- toolbars -->
  <div class="tool-band">
    <div class="tool-row d-flex">
      <div class="tbar">
        <span class="grip"></span>
        <svg class="tic"><use href="#i-new"/></svg><svg class="tic"><use href="#i-open"/></svg><svg class="tic"><use href="#i-save"/></svg>
        <span class="tsep"></span>
        <svg class="tic"><use href="#i-print"/></svg><svg class="tic"><use href="#i-preview"/></svg><svg class="tic"><use href="#i-plotbatch"/></svg><svg class="tic"><use href="#i-dwf"/></svg>
        <span class="tsep"></span>
        <svg class="tic"><use href="#i-cut"/></svg><svg class="tic"><use href="#i-copy"/></svg><svg class="tic"><use href="#i-paste"/></svg><svg class="tic"><use href="#i-match"/></svg><svg class="tic"><use href="#i-publish"/></svg>
        <span class="tsep"></span>
        <svg class="tic"><use href="#i-undo"/></svg><span class="tcar"><span class="qcaret"></span></span><svg class="tic"><use href="#i-redo"/></svg><span class="tcar"><span class="qcaret"></span></span>
        <span class="tsep"></span>
        <svg class="tic"><use href="#i-hand"/></svg><svg class="tic"><use href="#i-zrt"/></svg><svg class="tic"><use href="#i-zwin"/></svg><svg class="tic"><use href="#i-zprev"/></svg>
        <span class="tsep"></span>
        <svg class="tic"><use href="#i-props"/></svg><svg class="tic"><use href="#i-dc"/></svg><svg class="tic"><use href="#i-tp"/></svg><svg class="tic"><use href="#i-ssm"/></svg><svg class="tic"><use href="#i-mkup"/></svg><svg class="tic"><use href="#i-calc"/></svg>
        <span class="tsep"></span>
        <svg class="tic"><use href="#i-help"/></svg>
      </div>
      <div class="tbar">
        <span class="grip"></span>
        <svg class="tic"><use href="#i-tstyle"/></svg>
        <div class="cbo w-120">Standard<svg class="cbo-arrow" viewBox="0 0 10 6"><path d="M1 1l4 4 4-4" fill="none" stroke="#555"/></svg></div>
        <span class="tsep"></span>
        <svg class="tic"><use href="#i-dstyle"/></svg>
        <div class="cbo w-106">ISO-25<svg class="cbo-arrow" viewBox="0 0 10 6"><path d="M1 1l4 4 4-4" fill="none" stroke="#555"/></svg></div>
        <span class="tsep"></span>
        <svg class="tic"><use href="#d-table"/></svg>
        <div class="cbo w-135">Standard<svg class="cbo-arrow" viewBox="0 0 10 6"><path d="M1 1l4 4 4-4" fill="none" stroke="#555"/></svg></div>
        <span class="tsep"></span>
        <svg class="tic"><use href="#i-mstyle"/></svg>
        <div class="cbo w-120">Standard<svg class="cbo-arrow" viewBox="0 0 10 6"><path d="M1 1l4 4 4-4" fill="none" stroke="#555"/></svg></div>
      </div>
    </div>
    <div class="tool-row2 d-flex">
      <div class="tbar">
        <span class="grip"></span>
        <svg class="tic"><use href="#i-lprops"/></svg>
        <div class="cbo w-300">
          <svg class="lay-ic lay-bulb"><use href="#i-bulb"/></svg>
          <svg class="lay-ic"><use href="#i-sun"/></svg>
          <svg class="lay-ic"><use href="#i-vpfrz"/></svg>
          <svg class="lay-ic lay-lock"><use href="#i-lock"/></svg>
          <span class="swatch me-1"></span><span>0</span>
          <svg class="cbo-arrow" viewBox="0 0 10 6"><path d="M1 1l4 4 4-4" fill="none" stroke="#555"/></svg>
        </div>
        <svg class="tic"><use href="#i-lmatch"/></svg><svg class="tic"><use href="#i-lprev"/></svg><svg class="tic"><use href="#i-lstate"/></svg>
      </div>
      <div class="tbar">
        <span class="grip"></span>
        <div class="cbo w-150"><span class="swatch me-1"></span><span>ByLayer</span><svg class="cbo-arrow" viewBox="0 0 10 6"><path d="M1 1l4 4 4-4" fill="none" stroke="#555"/></svg></div>
        <span class="grip grip-s"></span>
        <div class="cbo w-160"><span class="line-sample ls-60"></span><span>ByLayer</span><svg class="cbo-arrow" viewBox="0 0 10 6"><path d="M1 1l4 4 4-4" fill="none" stroke="#555"/></svg></div>
        <span class="grip grip-s"></span>
        <div class="cbo w-125"><span class="line-sample ls-35"></span><span>ByLayer</span><svg class="cbo-arrow" viewBox="0 0 10 6"><path d="M1 1l4 4 4-4" fill="none" stroke="#555"/></svg></div>
      </div>
      <div class="tbar flex-grow-1 justify-content-end pe-1">
        <svg class="tic"><use href="#i-dlinear"/></svg><svg class="tic"><use href="#i-darc"/></svg><svg class="tic"><use href="#i-dord"/></svg>
        <span class="tsep"></span>
        <svg class="tic"><use href="#i-drad"/></svg><svg class="tic"><use href="#i-djog"/></svg><svg class="tic"><use href="#i-ddia"/></svg><svg class="tic"><use href="#i-dang"/></svg>
        <span class="tsep"></span>
        <svg class="tic"><use href="#i-dquick"/></svg><svg class="tic"><use href="#i-dcont"/></svg><svg class="tic"><use href="#i-dbase"/></svg><svg class="tic"><use href="#i-dspace"/></svg><svg class="tic"><use href="#i-dbreak"/></svg>
        <span class="tsep"></span>
        <svg class="tic"><use href="#i-dtol"/></svg><svg class="tic"><use href="#i-dcen"/></svg><svg class="tic"><use href="#i-dins"/></svg>
      </div>
    </div>
  </div>

  <!-- work area -->
  <div class="work d-flex">
    <div class="side-band side-left">
      <div class="vbar">
        <span class="vgrip"></span>
        <svg><use href="#d-line"/></svg><svg><use href="#d-ray"/></svg><svg><use href="#d-pline"/></svg><svg><use href="#d-poly"/></svg><svg><use href="#d-rect"/></svg><svg><use href="#d-arc"/></svg><svg><use href="#d-circle"/></svg><svg><use href="#d-cloud"/></svg><svg><use href="#d-spline"/></svg><svg><use href="#d-ell"/></svg><svg><use href="#d-ellarc"/></svg><svg><use href="#d-ins"/></svg><svg><use href="#d-blk"/></svg><svg><use href="#d-pt"/></svg><svg><use href="#d-hatch"/></svg><svg><use href="#d-grad"/></svg><svg><use href="#d-region"/></svg><svg><use href="#d-table"/></svg><svg><use href="#d-text"/></svg><svg><use href="#d-addsel"/></svg>
      </div>
    </div>
    <div class="canvas">
      <span class="cross-v"></span>
      <span class="pick-box"></span>
      <div class="view-label">[−][俯视][二维线框]</div>
      <svg class="ucs-ic" viewBox="0 0 80 80">
        <path d="M6.500 20v47.500M6.500 71.500H58" stroke="#fff" fill="none"/>
        <path d="M3 67h9v9H3z" fill="none" stroke="#fff"/>
        <path d="M9 5l6.500 6.500M22 5l-6.500 6.500V19M62 57l12 12M74 57L62 69" stroke="#fff" fill="none"/>
      </svg>
      <div class="cmd-hist cmd-hist1">Ãâ·ÑÃÔÄãiMini¹¤¾ß26ÖÜÄê°æ&lt;V7.7.10&gt;,°æÈ¨ËùÓÐMai.C.Y&lt;QQ:509157557&gt;</div>
      <div class="cmd-hist cmd-hist2">命令:</div>
      <div class="cmd-bar d-flex">
        <div class="cmd-handle d-flex align-items-center">
          <span class="cmd-grip"></span>
          <svg width="11" height="11" viewBox="0 0 11 11"><path d="M1 1l9 9M10 1l-9 9" stroke="#b8bcc2" stroke-width="2"/></svg>
          <svg width="16" height="16" viewBox="0 0 16 16" class="ms-1"><path d="M1 15l7-7c-1-3 1-7 5-7l-2 3 1 2 3-1c0 4-3 6-6 5l-6 6z" fill="#b8bcc2"/></svg>
        </div>
        <div class="cmd-input d-flex align-items-center">
          <svg width="16" height="13" viewBox="0 0 16 13"><path d="M.5.500h15v12H.5z" fill="#d6d6d6" stroke="#333"/><path d="M.5.500h15v2H.5z" fill="#444"/><path d="M3 5l3 2-3 2M7 10h4" fill="none" stroke="#222"/></svg>
          <span class="qcaret cmd-caret ms-1"></span>
          <span class="ms-1">键入命令</span>
        </div>
      </div>
    </div>
    <div class="side-band side-right">
      <div class="vbar">
        <span class="vgrip"></span>
        <svg><use href="#m-erase"/></svg><svg><use href="#m-copy"/></svg><svg><use href="#m-mirror"/></svg><svg><use href="#m-offset"/></svg><svg><use href="#m-array"/></svg><svg><use href="#m-move"/></svg><svg><use href="#m-rotate"/></svg><svg><use href="#m-scale"/></svg><svg><use href="#m-stretch"/></svg><svg><use href="#m-trim"/></svg><svg><use href="#m-extend"/></svg><svg><use href="#m-break"/></svg><svg><use href="#m-break2"/></svg><svg><use href="#m-join"/></svg><svg><use href="#m-chamf"/></svg><svg><use href="#m-fillet"/></svg><svg><use href="#m-blend"/></svg><svg><use href="#m-3d"/></svg>
      </div>
      <div class="vbar">
        <span class="vgrip"></span>
        <svg><use href="#o-front"/></svg><svg><use href="#o-back"/></svg><svg><use href="#o-above"/></svg><svg><use href="#o-under"/></svg>
        <span class="vline"></span>
        <svg><use href="#o-abc"/></svg><svg><use href="#o-hatch"/></svg>
      </div>
    </div>
  </div>
  <div class="bottom-gap"></div>

  <!-- layout tabs and status bar -->
  <div class="bottom-bar d-flex align-items-center">
    <span class="burger"></span>
    <div class="lay-tab">模型</div>
    <span class="lay-other ms-2">布局1</span>
    <span class="slash ms-2"></span>
    <span class="lay-other ms-2">布局2</span>
    <span class="slash ms-2"></span>
    <span class="plus-ic ms-2"></span>
    <span class="slash ms-2 ps-1"></span>
    <div class="status d-flex ms-auto">
      <div class="sgrp stext-1">[迷你比例 : 1 ]</div>
      <div class="sgrp stext-2">模型</div>
      <div class="sgrp">
        <span class="sslot"><svg><use href="#s-grid"/></svg></span><span class="sslot"><svg><use href="#s-snap"/></svg></span><span class="sarr"><span class="qcaret"></span></span>
      </div>
      <div class="sgrp">
        <span class="sslot"><svg><use href="#s-ortho"/></svg></span><span class="sslot sslot-on"><svg><use href="#s-polar"/></svg></span><span class="sarr"><span class="qcaret"></span></span><span class="sslot"><svg><use href="#s-track"/></svg></span><span class="sarr"><span class="qcaret"></span></span><span class="sslot sslot-on"><svg><use href="#s-iso"/></svg></span><span class="sslot sslot-on"><svg><use href="#s-osnap"/></svg></span><span class="sarr"><span class="qcaret"></span></span>
      </div>
      <div class="sgrp">
        <span class="sslot sslot-on"><svg><use href="#s-ann"/></svg></span><span class="sslot"><svg><use href="#s-annb"/></svg></span><span class="sslot"><svg><use href="#s-annc"/></svg></span><span class="sslot stext-3">1:1</span><span class="sarr"><span class="qcaret"></span></span>
      </div>
      <div class="sgrp">
        <span class="sslot"><svg><use href="#s-gear"/></svg></span><span class="sarr"><span class="qcaret"></span></span>
      </div>
      <div class="sgrp"><span class="sslot sslot-25"><span class="plus-ic"></span></span></div>
      <div class="sgrp"><span class="sslot"><svg><use href="#s-shapes"/></svg></span></div>
      <div class="sgrp"><span class="sslot sslot-30"><svg><use href="#s-warn"/></svg></span></div>
      <div class="sgrp"><span class="sslot"><svg><use href="#s-full"/></svg></span></div>
      <div class="sgrp"><span class="sslot sslot-25"><span class="burger"></span></span></div>
    </div>
  </div>

  <!-- cascading menu -->
  <div class="pop-menu pop-main">
    <div class="pitem"><svg><use href="#p-scale"/></svg>切换绘图比例-&gt;</div>
    <div class="pitem"><svg><use href="#p-pcp"/></svg>快捷键设置---&gt;</div>
    <div class="pitem"><svg><use href="#p-gear"/></svg>迷你用户配置-&gt;</div>
    <div class="pitem psub">视口布局</div>
    <div class="pitem psub">系统工具</div>
    <div class="pitem psub">各式面板</div>
    <div class="psep"></div>
    <div class="pitem psub pitem-on">墙柱和梁</div>
    <div class="pitem psub">门窗工具</div>
    <div class="pitem psub">建筑构件</div>
    <div class="pitem psub">建筑符号 a</div>
    <div class="pitem psub">建筑符号 b</div>
    <div class="psep"></div>
    <div class="pitem psub">装饰工具 a</div>
    <div class="pitem psub">装饰工具 b</div>
    <div class="pitem psub">装饰索引</div>
    <div class="psep"></div>
    <div class="pitem psub">线形工具</div>
    <div class="pitem psub">景观工具</div>
    <div class="pitem psub">统计工具</div>
    <div class="pitem psub">扩展工具</div>
    <div class="psep"></div>
    <div class="pitem psub">文字工具 a</div>
    <div class="pitem psub">文字工具 b</div>
    <div class="pitem psub">标注工具</div>
    <div class="pitem psub">图块工具</div>
    <div class="pitem psub">属性参照</div>
    <div class="pitem psub">曲线边界</div>
    <div class="pitem psub">填充工具</div>
    <div class="pitem psub">变形工具</div>
    <div class="psep"></div>
    <div class="pitem psub">清理优化</div>
    <div class="pitem psub">组和遮罩</div>
    <div class="pitem psub">图层显示</div>
    <div class="pitem psub">刷子对齐</div>
  </div>
  <div class="pop-menu pop-sub">
    <div class="pitem"><svg><use href="#p-grid"/></svg>直线轴网</div>
    <div class="pitem"><svg><use href="#p-arcgrid"/></svg>圆弧轴网</div>
    <div class="pitem"><svg><use href="#p-axnum"/></svg>轴线编号</div>
    <div class="pitem"><svg><use href="#p-axoff"/></svg>轴线号外偏</div>
    <div class="pitem"><svg><use href="#p-axedit"/></svg>修改轴线编号</div>
    <div class="psep"></div>
    <div class="pitem"><svg><use href="#p-fix"/></svg>智能修补墙柱门窗</div>
    <div class="pitem"><svg><use href="#p-del"/></svg>删除墙柱门窗</div>
    <div class="psep"></div>
    <div class="pitem"><svg><use href="#p-wall"/></svg>画墙</div>
    <div class="pitem"><svg><use href="#p-wwid"/></svg>批量修改墙宽</div>
    <div class="pitem"><svg><use href="#p-sline"/></svg>单线变墙</div>
    <div class="psep"></div>
    <div class="pitem"><svg><use href="#p-col1"/></svg> +  型柱</div>
    <div class="pitem"><svg><use href="#p-col2"/></svg> L  型柱</div>
    <div class="pitem"><svg><use href="#p-col3"/></svg> T  型柱</div>
    <div class="pitem"><svg><use href="#p-col4"/></svg><span class="mini-glyph">○</span>型柱</div>
    <div class="pitem"><svg><use href="#p-col5"/></svg><span class="mini-glyph">□</span>型柱</div>
    <div class="pitem"><svg><use href="#p-colgrid"/></svg>轴线布柱</div>
    <div class="pitem"><svg><use href="#p-pkpm"/></svg>处理PKPM  GS生成的柱子</div>
    <div class="pitem"><svg><use href="#p-pl2col"/></svg>多段线,块,填充变柱</div>
    <div class="psep"></div>
    <div class="pitem"><svg><use href="#p-fill"/></svg>填充柱或墙</div>
    <div class="pitem"><svg><use href="#p-finish"/></svg>墙体完成面或保温层线</div>
    <div class="psep"></div>
    <div class="pitem"><svg><use href="#p-beam"/></svg>画梁</div>
    <div class="pitem"><svg><use href="#p-beam2"/></svg>单线变梁</div>
    <div class="pitem"><svg><use href="#p-beam3"/></svg>智能修补梁柱</div>
    <div class="pitem"><svg><use href="#p-raft"/></svg>筏板梁倒角</div>
    <div class="pitem"><svg><use href="#p-bwid"/></svg>批量修改梁宽</div>
    <div class="pitem"><svg><use href="#p-baxis"/></svg>梁生轴线</div>
  </div>
</div>
</body>
</html>
